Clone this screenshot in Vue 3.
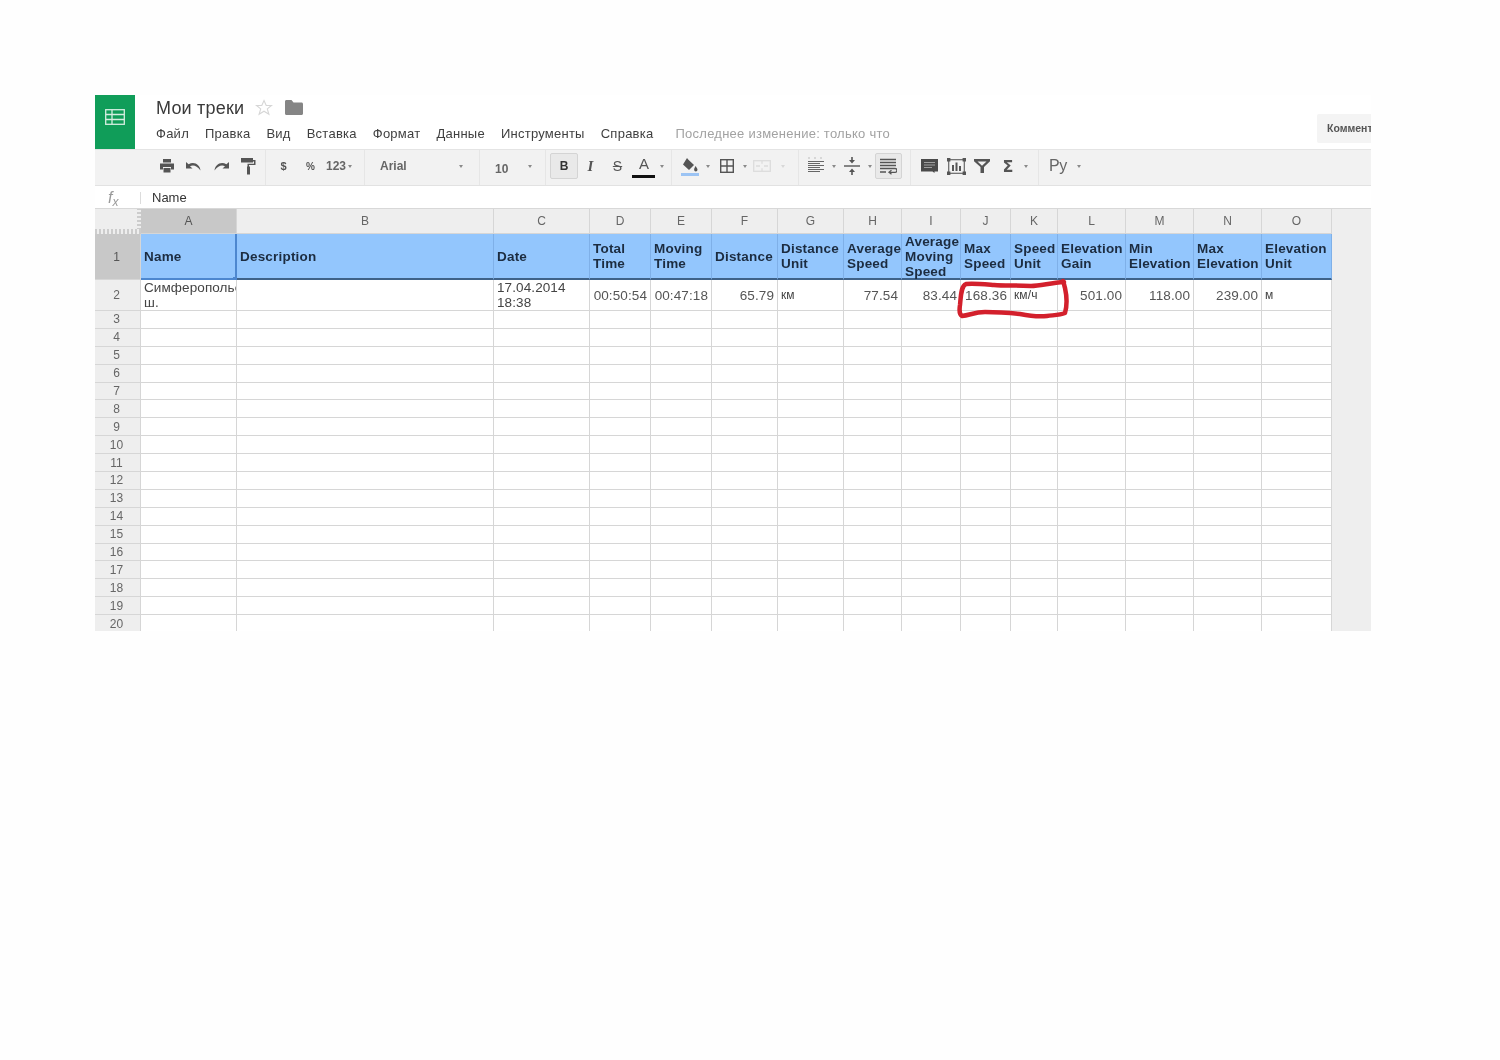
<script setup>
const cols = ['A','B','C','D','E','F','G','H','I','J','K','L','M','N','O']
const menu = ['Файл','Правка','Вид','Вставка','Формат','Данные','Инструменты','Справка']
const heads = ['Name','Description','Date','Total\nTime','Moving\nTime','Distance','Distance\nUnit','Average\nSpeed','Average\nMoving\nSpeed','Max\nSpeed','Speed\nUnit','Elevation\nGain','Min\nElevation','Max\nElevation','Elevation\nUnit']
const row2 = [
  { t: 'Симферопольс\nш.', c: 'tight' }, { t: '' }, { t: '17.04.2014\n18:38', c: 'tight' },
  { t: '00:50:54', c: 'num' }, { t: '00:47:18', c: 'num' }, { t: '65.79', c: 'num' }, { t: 'км', c: 'unit' },
  { t: '77.54', c: 'num' }, { t: '83.44', c: 'num' }, { t: '168.36', c: 'num' }, { t: 'км/ч', c: 'unit' },
  { t: '501.00', c: 'num' }, { t: '118.00', c: 'num' }, { t: '239.00', c: 'num' }, { t: 'м', c: 'unit' }
]
const blankRows = Array.from({ length: 18 }, (_, i) => i + 3)
</script>

<template>
  <div class="frame">
    <header class="top">
      <div class="logo">
        <svg width="20" height="16" viewBox="0 0 20 16" fill="none" stroke="#d5eee0" stroke-width="1.3">
          <rect x="0.7" y="0.7" width="18.6" height="14.6" />
          <path d="M0.7 5.5H19.3M0.7 10.5H19.3M7 0.7V15.3" />
        </svg>
      </div>
      <div class="titles">
        <div class="title-row">
          <span class="title">Мои треки</span>
          <svg class="star" width="18" height="17" viewBox="0 0 18 17" fill="none" stroke="#d6d6d6" stroke-width="1.1">
            <path d="M9 1.5l2.2 5h5.3l-4.2 3.4 1.6 5.4L9 12.2l-4.9 3.1 1.6-5.4L1.5 6.5h5.3z" />
          </svg>
          <svg class="folder" width="18" height="15" viewBox="0 0 18 15" fill="#858585">
            <path d="M0 1.5C0 .6.6 0 1.5 0h5L8.500 2.500H16.500c.9 0 1.500.6 1.500 1.500v9.500c0 .9-.6 1.500-1.500 1.500h-15C.6 15 0 14.400 0 13.500z" />
          </svg>
        </div>
        <nav class="menu">
          <span v-for="m in menu" :key="m">{{ m }}</span>
          <span class="saved">Последнее изменение: только что</span>
        </nav>
      </div>
      <div class="comment-btn">Коммент</div>
    </header>

    <div class="toolbar">
      <div class="group g1">
        <span class="btn">
          <svg width="16" height="16" viewBox="0 0 16 16" fill="#555"><rect x="4" y="1" width="8" height="3.500" /><path d="M1 5.500h14v6h-3V9H4v2.500H1z" /><rect x="4.500" y="10" width="7" height="4.500" /></svg>
        </span>
        <span class="btn">
          <svg width="18" height="12" viewBox="0 0 18 12" fill="#555"><path d="M1 2v6.500h6.500L5 6.200C8 4.500 12 5.500 15.500 10.500 15 5 9.500 1 3.600 4.200z" /></svg>
        </span>
        <span class="btn">
          <svg width="18" height="12" viewBox="0 0 18 12" fill="#555"><path d="M17 2v6.500h-6.500L13 6.200C10 4.500 6 5.500 2.500 10.500 3 5 8.500 1 14.400 4.200z" /></svg>
        </span>
        <span class="btn">
          <svg width="16" height="18" viewBox="0 0 16 18" fill="#555"><rect x="1" y="1" width="12" height="4.500" /><path d="M13 3h2.500v5H9v2H7.500V6.800h6.500V4.500H13z" /><rect x="7" y="9.500" width="3" height="8" /></svg>
        </span>
      </div>
      <div class="group g2">
        <span class="btn txt">$</span>
        <span class="btn txt small">%</span>
        <span class="num-fmt">123</span>
        <i class="caret c-tight"></i>
      </div>
      <div class="group g3">
        <span class="drop-label">Arial</span>
        <i class="caret push"></i>
      </div>
      <div class="group g4">
        <span class="drop-label">10</span>
        <i class="caret push"></i>
      </div>
      <div class="group g5">
        <span class="btn active bold-btn">B</span>
        <span class="btn italic">I</span>
        <span class="btn strike">S</span>
        <span class="btn color-a">A<i class="a-bar"></i></span>
        <i class="caret"></i>
      </div>
      <div class="group g6">
        <span class="btn fill-btn">
          <svg width="18" height="20" viewBox="0 0 18 20"><path fill="#555" d="M6 1l1.200 1.500L13 8l-5 5-6-5.500zM14.500 9s2 2.500 2 3.700a1.700 1.700 0 01-3.400 0c0-1.200 1.400-3.700 1.400-3.700z" /><rect x="0" y="16" width="19" height="3" fill="#9cc4f4" /></svg>
        </span>
        <i class="caret"></i>
        <span class="btn gap-l">
          <svg width="14" height="14" viewBox="0 0 14 14" fill="none" stroke="#555" stroke-width="1.400"><rect x="0.700" y="0.700" width="12.600" height="12.600" /><path d="M7 .7v12.600M.7 7h12.600" /></svg>
        </span>
        <i class="caret"></i>
        <span class="btn merge">
          <svg width="18" height="12" viewBox="0 0 18 12" fill="none" stroke="#dcdcdc" stroke-width="1.300"><rect x="0.700" y="0.700" width="16.600" height="10.600" /><path d="M9 .7v3M9 8.300v3M3 6h4M11 6h4" /></svg>
        </span>
        <i class="caret faint"></i>
      </div>
      <div class="group g7">
        <span class="btn">
          <svg width="16" height="18" viewBox="0 0 16 18" fill="none" stroke="#666" stroke-width="1.200"><path d="M0 1h2M6 1h2M12 1h2" stroke="#bbb" /><path d="M0 4.500h16M0 6.500h12M0 8.500h16M0 10.500h12M0 12.500h16M0 14.500h12" /></svg>
        </span>
        <i class="caret"></i>
        <span class="btn">
          <svg width="16" height="20" viewBox="0 0 16 20" fill="#555"><path d="M0 9.300h16v1.400H0z" /><path d="M7.200 1h1.600v3H11L8 7.500 5 4h2.200zM7.200 19h1.600v-3H11L8 12.500 5 16h2.200z" /></svg>
        </span>
        <i class="caret"></i>
        <span class="btn active wrap-btn">
          <svg width="17" height="17" viewBox="0 0 17 17" fill="none" stroke="#555" stroke-width="1.300"><path d="M0 1.500h16M0 4.500h16M0 7.500h16M0 10.500h15a1.800 1.800 0 010 3.800H10M0 14h6" /><path d="M11.500 12.300L9 14.300l2.500 2" /></svg>
        </span>
      </div>
      <div class="group g8">
        <span class="btn">
          <svg width="17" height="16" viewBox="0 0 17 16" fill="#4a4a4a"><path d="M0 1h17v12.500h-3.500V15l-2-1.500H0z" /><path d="M3 4.500h11M3 7h11M3 9.500h8" stroke="#aaa" stroke-width=".9" /></svg>
        </span>
        <span class="btn one">
          <svg width="19" height="17" viewBox="0 0 19 17"><rect x="1.700" y="1.700" width="15.600" height="13.600" fill="none" stroke="#666" stroke-width="1.200" /><path fill="#555" d="M0 0h3.400v3.400H0zM15.600 0H19v3.400h-3.400zM0 13.600h3.400V17H0zM15.600 13.600H19V17h-3.400zM5 7h2v6H5zM8.500 4.500h2V13h-2zM12 8h2v5h-2z" /></svg>
        </span>
        <span class="btn">
          <svg width="16" height="14" viewBox="0 0 16 14" fill="#555"><path d="M0 0h16v2.300L10 8v6H6.500V8L0 2.300zM3.500 2.500L8 6.700 12.500 2.500z" fill-rule="evenodd" /></svg>
        </span>
        <span class="btn txt sigma">Σ</span>
        <i class="caret"></i>
      </div>
      <div class="group g9">
        <span class="lang">Ру</span>
        <i class="caret lang-caret"></i>
      </div>
    </div>

    <div class="formula">
      <span class="fx">f<small class="fx-sub">x</small></span>
      <span class="fx-sep"></span>
      <span class="fx-value">Name</span>
    </div>

    <div class="sheet">
      <div class="corner"></div>
      <div v-for="(c, i) in cols" :key="c" class="col-head" :class="{ selected: i === 0 }">{{ c }}</div>
      <div class="filler"></div>

      <div class="row-head selected">1</div>
      <div v-for="(h, i) in heads" :key="h + i" class="cell head" :class="{ picked: i === 0 }">
        {{ h }}<i v-if="i === 0" class="handle"></i>
      </div>
      <div class="filler"></div>

      <div class="row-head">2</div>
      <div v-for="(v, i) in row2" :key="'r2' + i" class="cell body" :class="v.c">{{ v.t }}</div>
      <div class="filler"></div>

      <template v-for="r in blankRows" :key="r">
        <div class="row-head">{{ r }}</div>
        <div v-for="c in cols" :key="c" class="cell"></div>
        <div class="filler"></div>
      </template>
    </div>

    <svg class="scribble" viewBox="95 95 1276 536" width="1276" height="536" fill="none" stroke="#d3202c" stroke-width="4.500" stroke-linecap="round" stroke-linejoin="round">
      <path d="M1064 282C1050 283 1040 286 1031 286C1015 285 1005 286 994 285C982 284 972 283 966 284C961 286 961 295 960 305C959 311 960 315 962 316C970 315 975 312 985 312C1000 312 1010 313 1020 314C1030 316 1038 317 1047 316C1055 315 1060 315 1065 313C1067 306 1067 297 1065 288C1064 285 1064 283 1063 281" />
    </svg>
  </div>
</template>

<style scoped>
.frame {
  position: relative;
  box-sizing: border-box;
  width: 1276px;
  height: 536px;
  margin: 95px 0 0 95px;
  overflow: hidden;
  font-family: "Liberation Sans", Arial, sans-serif;
  color: #333;
  background: #fff;
  filter: blur(0.55px);
}
.top {
  display: flex;
  height: 54px;
}
.logo {
  flex: none;
  display: flex;
  align-items: center;
  justify-content: center;
  width: 40px;
  height: 54px;
  padding-bottom: 10px;
  box-sizing: border-box;
  background: #109d59;
}
.titles {
  flex: 1;
  padding-left: 21px;
}
.title-row {
  display: flex;
  align-items: center;
  height: 26px;
}
.title {
  font-size: 18px;
  letter-spacing: 0.2px;
  color: #3a3a3a;
}
.star {
  margin-left: 11px;
  margin-top: -1px;
}
.folder {
  margin-left: 12px;
  margin-top: -2px;
}
.menu {
  display: flex;
  gap: 16px;
  margin-top: 5px;
  font-size: 13px;
  line-height: 16px;
  letter-spacing: 0.25px;
  color: #3f3f3f;
}
.menu .saved {
  margin-left: 6px;
  color: #a2a2a2;
}
.comment-btn {
  flex: none;
  align-self: flex-start;
  box-sizing: border-box;
  width: 54px;
  height: 29px;
  margin-top: 19px;
  padding-left: 10px;
  overflow: hidden;
  white-space: nowrap;
  font-size: 10.500px;
  font-weight: 700;
  line-height: 29px;
  color: #555;
  background: #f4f4f4;
  border-radius: 2px 0 0 2px;
}
.toolbar {
  display: flex;
  box-sizing: border-box;
  height: 37px;
  background: #f2f2f2;
  border-top: 1px solid #e4e4e4;
  border-bottom: 1px solid #e2e2e2;
}
.group {
  flex: none;
  display: flex;
  align-items: center;
  box-sizing: border-box;
  border-right: 1px solid #e6e6e6;
  padding-bottom: 3px;
}
.g1 { width: 171px; padding-left: 58px; }
.g2 { width: 99px; padding-left: 4px; }
.g3 { width: 115px; padding: 0 16px 3px 15px; }
.g4 { width: 66px; padding: 0 13px 3px 15px; }
.g5 { width: 126px; padding-left: 4px; }
.g6 { width: 127px; padding-left: 5px; }
.g7 { width: 112px; padding-left: 4px; }
.g8 { width: 128px; padding-left: 5px; }
.g9 { flex: 1; border-right: 0; padding-left: 10px; }
.btn {
  flex: none;
  position: relative;
  display: flex;
  align-items: center;
  justify-content: center;
  box-sizing: border-box;
  width: 27px;
  height: 26px;
  color: #555;
}
.g6 .btn, .g7 .btn, .g8 .btn { width: 26px; }
.g8 .btn.one { margin-left: 1px; }
.txt {
  font-size: 11px;
  font-weight: 700;
}
.txt.small { font-size: 10px; }
.num-fmt {
  margin-left: 2px;
  font-size: 12px;
  font-weight: 700;
  color: #666;
}
.caret {
  flex: none;
  width: 0;
  height: 0;
  margin-left: 3px;
  border-top: 3px solid #8a8a8a;
  border-left: 2.500px solid transparent;
  border-right: 2.500px solid transparent;
}
.c-tight { margin-left: 2px; }
.caret.push { margin-left: auto; }
.caret.faint { margin-left: 6px; border-top-color: #d8d8d8; }
.lang-caret { margin-left: 10px; }
.drop-label {
  font-size: 12px;
  font-weight: 700;
  color: #666;
}
.g4 .drop-label { margin-top: 5px; }
.active {
  background: #e9e9e9;
  border: 1px solid #d4d4d4;
  border-radius: 2px;
}
.bold-btn {
  width: 28px;
  font-size: 12px;
  font-weight: 700;
  color: #333;
  margin-right: -1px;
}
.italic {
  font-family: "Liberation Serif", serif;
  font-style: italic;
  font-weight: 700;
  font-size: 15px;
}
.strike {
  font-size: 14px;
  text-decoration: line-through;
}
.color-a {
  width: 26px;
  padding-bottom: 5px;
  font-size: 15px;
}
.a-bar {
  position: absolute;
  left: 1px;
  right: 2px;
  bottom: 1px;
  height: 3px;
  background: #111;
}
.fill-btn svg { margin-top: 2px; }
.gap-l { margin-left: 4px; }
.g7 .caret + .btn { margin-left: 3px; }
.g6 .merge { margin-left: 2px; }
.g7 .wrap-btn { width: 27px; margin-left: 5px; }
.sigma {
  font-size: 16px;
  font-family: "DejaVu Sans", sans-serif;
  color: #555;
}
.lang {
  font-size: 16px;
  letter-spacing: -0.3px;
  color: #666;
}
.formula {
  display: flex;
  align-items: center;
  box-sizing: border-box;
  height: 23px;
  background: #fff;
}
.fx {
  width: 45px;
  padding-left: 13px;
  box-sizing: border-box;
  font-family: "Liberation Sans", sans-serif;
  font-style: italic;
  font-size: 16px;
  color: #9a9a9a;
}
.fx-sub {
  position: relative;
  top: 3px;
  font-size: 12px;
}
.fx-sep {
  width: 1px;
  height: 12px;
  background: #dcdcdc;
}
.fx-value {
  margin-left: 11px;
  font-size: 13px;
  color: #333;
}
.sheet {
  display: grid;
  grid-template-columns: 46px 96px 257px 96px 61px 61px 66px 66px 58px 59px 50px 47px 68px 68px 68px 70px 39px;
  grid-template-rows: 25px 46px 31px;
  grid-auto-rows: 17.900px;
  border-top: 1px solid #d8d8d8;
  margin-top: -1px;
}
.corner {
  position: relative;
  background: #eee;
}
.corner::after {
  content: "";
  position: absolute;
  left: 0;
  right: 0;
  bottom: 0;
  height: 5px;
  background: repeating-linear-gradient(90deg, #ccc 0 2px, #eee 2px 4px);
}
.corner::before {
  content: "";
  position: absolute;
  top: 0;
  right: 0;
  bottom: 0;
  width: 4px;
  background: repeating-linear-gradient(0deg, #ccc 0 2px, #eee 2px 4px);
}
.col-head, .row-head {
  display: flex;
  align-items: center;
  justify-content: center;
  box-sizing: border-box;
  font-size: 12px;
  color: #666;
  background: #eee;
  border-right: 1px solid #d6d6d6;
  border-bottom: 1px solid #d6d6d6;
}
.row-head {
  padding-right: 2px;
}
.selected {
  background: #c8c8c8;
  color: #555;
}
.filler {
  background: #eee;
}
.cell {
  position: relative;
  box-sizing: border-box;
  overflow: hidden;
  white-space: pre;
  border-right: 1px solid #d6d6d6;
  border-bottom: 1px solid #d6d6d6;
  background: #fff;
}
.head {
  display: flex;
  align-items: center;
  padding-left: 3px;
  overflow: visible;
  font-size: 13.500px;
  font-weight: 700;
  line-height: 15px;
  letter-spacing: 0.2px;
  color: #1c2c40;
  background: #93c6fd;
  border-right-color: #7fb0e8;
  border-bottom: 2px solid #3f6288;
}
.picked {
  border-right: 2px solid #4d87cf;
  border-bottom: 2px solid #4d87cf;
}
.handle {
  position: absolute;
  right: -3px;
  bottom: -4px;
  width: 5px;
  height: 5px;
  background: #4d87cf;
}
.body {
  display: flex;
  align-items: center;
  padding: 0 3px;
  font-size: 13.500px;
  letter-spacing: 0.1px;
  color: #444;
}
.tight {
  line-height: 15px;
}
.num {
  justify-content: flex-end;
  color: #555;
}
.unit {
  font-size: 12px;
  color: #444;
}
.scribble {
  position: absolute;
  top: 0;
  left: 0;
  pointer-events: none;
}
</style>

<style>
html, body {
  margin: 0;
  background: #fefefe;
}
</style>
